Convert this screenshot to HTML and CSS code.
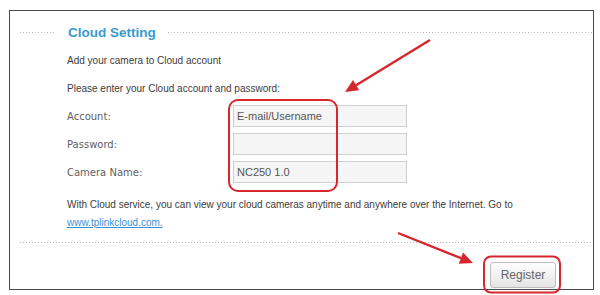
FILE: index.html
```html
<!DOCTYPE html>
<html>
<head>
<meta charset="utf-8">
<link rel="stylesheet" href="styles.css">
</head>
<body>
<div class="page">
  <div class="panel">
    <div class="header">
      <span class="dots dots-left"></span>
      <span class="title">Cloud Setting</span>
      <span class="dots dots-right"></span>
    </div>
    <div class="content">
      <p class="line line1">Add your camera to Cloud account</p>
      <p class="line line2">Please enter your Cloud account and password:</p>
      <div class="form">
        <div class="row"><span class="label">Account:</span><input class="field" type="text" value="E-mail/Username"></div>
        <div class="row"><span class="label">Password:</span><input class="field" type="text" value=""></div>
        <div class="row"><span class="label">Camera Name:</span><input class="field" type="text" value="NC250 1.0"></div>
      </div>
      <p class="info">With Cloud service, you can view your cloud cameras anytime and anywhere over the Internet. Go to<br><a class="link" href="#">www.tplinkcloud.com.</a></p>
    </div>
    <div class="dots dots-bottom"></div>
    <div class="actions">
      <button class="btn" type="button">Register</button>
    </div>
  </div>
  <svg class="marks" width="600" height="295" viewBox="0 0 600 295">
    <rect x="229" y="100" width="108" height="91" rx="9" ry="9" fill="none" stroke="#d8262e" stroke-width="2"/>
    <rect x="484" y="256.5" width="76" height="36" rx="7" ry="7" fill="none" stroke="#d8262e" stroke-width="2"/>
    <line x1="430" y1="40" x2="356" y2="85.2" stroke="#d8262e" stroke-width="2.4"/>
    <polygon points="345,92 359.2,90.3 353,80.1" fill="#d8262e"/>
    <line x1="398" y1="233" x2="461" y2="258.2" stroke="#d8262e" stroke-width="2.4"/>
    <polygon points="473,263 458.7,263.8 463.1,252.6" fill="#d8262e"/>
  </svg>
</div>
</body>
</html>
```

FILE: styles.css
```css
html, body {
  margin: 0;
  padding: 0;
  background: #ffffff;
}

.page {
  position: relative;
  width: 600px;
  height: 295px;
  overflow: hidden;
  font-family: "Liberation Sans", Arial, sans-serif;
}

.panel {
  margin: 10px 0 0 9px;
  width: 585px;
  height: 280px;
  box-sizing: border-box;
  border: 1px solid #4a4a4a;
  display: flex;
  flex-direction: column;
}

.header {
  margin-top: 7px;
  height: 28px;
  display: flex;
  align-items: center;
  padding-left: 10px;
}

.dots {
  height: 1px;
  background-image: repeating-linear-gradient(to right, #b8b8b8 0 1px, transparent 1px 3px);
}

.dots-left {
  width: 34px;
}

.dots-right {
  flex: 1;
  margin-left: 12px;
}

.title {
  margin-left: 14px;
  font-size: 13.5px;
  font-weight: bold;
  color: #3a9ad0;
}

.content {
  padding-left: 57px;
}

.line {
  margin: 0;
  font-size: 10px;
  color: #3c3c3c;
  line-height: 28px;
}

.line1 {
  margin-top: 1px;
}

.line2 {
  line-height: 27px;
}

.form {
  display: flex;
  flex-direction: column;
}

.row {
  height: 28px;
  display: flex;
  align-items: center;
}

.label {
  width: 166px;
  font-family: "DejaVu Sans", Verdana, sans-serif;
  font-size: 10px;
  color: #5e5e5e;
}

.field {
  width: 174px;
  height: 22px;
  box-sizing: border-box;
  margin: 0;
  padding: 0 0 0 3px;
  border: 1px solid #cfcfcf;
  background: #f5f5f5;
  font-family: "Liberation Sans", Arial, sans-serif;
  font-size: 11px;
  color: #555555;
  outline: none;
}

.info {
  margin: 10px 0 0 0;
  font-size: 10px;
  line-height: 18px;
  color: #3c3c3c;
}

.link {
  color: #3a8fd6;
  text-decoration: underline;
}

.dots-bottom {
  margin: 10px 0 0 10px;
}

.actions {
  display: flex;
  justify-content: flex-end;
  padding-right: 37px;
  margin-top: 19px;
}

.btn {
  width: 66px;
  height: 26px;
  margin: 0;
  padding: 0;
  border: 1px solid #bdbdbd;
  border-radius: 3px;
  background: linear-gradient(to bottom, #ffffff, #e4e4e4);
  font-family: "Liberation Sans", Arial, sans-serif;
  font-size: 12px;
  color: #666666;
}

.marks {
  position: absolute;
  left: 0;
  top: 0;
  pointer-events: none;
}
```
